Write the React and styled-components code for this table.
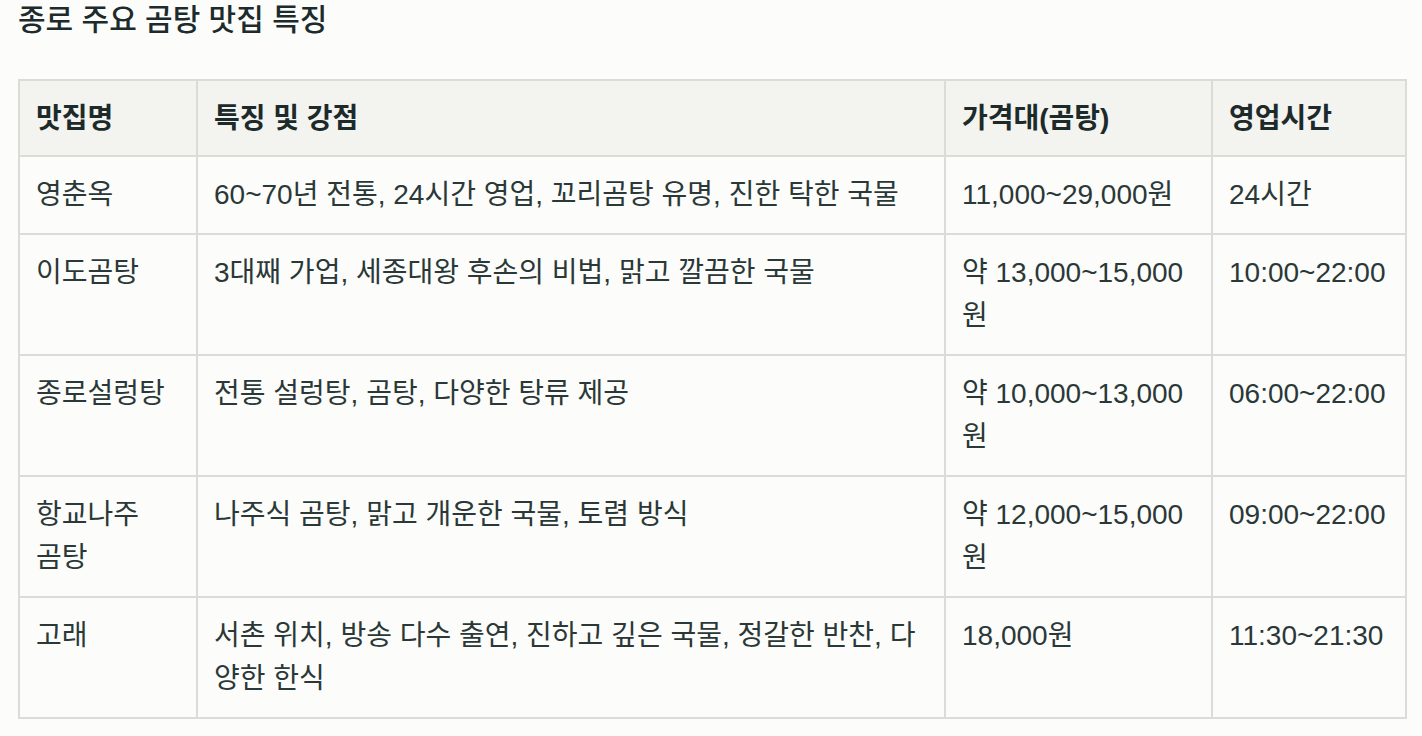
import React from 'react';
import styled, { createGlobalStyle } from 'styled-components';

const GlobalStyle = createGlobalStyle`
    html, body {
        margin: 0;
        padding: 0;
        background-color: #fcfcfa;
    }

    body {
        font-family: "Liberation Sans", "Noto Sans CJK KR", sans-serif;
        color: #1f2f2f;
    }
`;

const restaurants = [
    {
        name: '영춘옥',
        feature: '60~70년 전통, 24시간 영업, 꼬리곰탕 유명, 진한 탁한 국물',
        price: '11,000~29,000원',
        hours: '24시간',
    },
    {
        name: '이도곰탕',
        feature: '3대째 가업, 세종대왕 후손의 비법, 맑고 깔끔한 국물',
        price: '약 13,000~15,000원',
        hours: '10:00~22:00',
    },
    {
        name: '종로설렁탕',
        feature: '전통 설렁탕, 곰탕, 다양한 탕류 제공',
        price: '약 10,000~13,000원',
        hours: '06:00~22:00',
    },
    {
        name: '항교나주 곰탕',
        feature: '나주식 곰탕, 맑고 개운한 국물, 토렴 방식',
        price: '약 12,000~15,000원',
        hours: '09:00~22:00',
    },
    {
        name: '고래',
        feature: '서촌 위치, 방송 다수 출연, 진하고 깊은 국물, 정갈한 반찬, 다양한 한식',
        price: '18,000원',
        hours: '11:30~21:30',
    },
];

const App = () => {
    return (
        <Page>
            <GlobalStyle />
            <Title>종로 주요 곰탕 맛집 특징</Title>
            <Table>
                <colgroup>
                    <col style={{ width: '178px' }} />
                    <col style={{ width: '748px' }} />
                    <col style={{ width: '267px' }} />
                    <col style={{ width: '194px' }} />
                </colgroup>
                <thead>
                    <tr>
                        <Th>맛집명</Th>
                        <Th>특징 및 강점</Th>
                        <Th>가격대(곰탕)</Th>
                        <Th>영업시간</Th>
                    </tr>
                </thead>
                <tbody>
                    {restaurants.map((r) => (
                        <tr key={r.name}>
                            <NameCell>{r.name}</NameCell>
                            <Td>{r.feature}</Td>
                            <Td>{r.price}</Td>
                            <Td>{r.hours}</Td>
                        </tr>
                    ))}
                </tbody>
            </Table>
        </Page>
    );
};

export default App;

const Page = styled.div`
    padding: 0 17px 20px 18px;
    min-height: 100vh;
    box-sizing: border-box;
`;

const Title = styled.h2`
    margin: 0 0 40px;
    padding-top: 1px;
    font-size: 30px;
    line-height: 38px;
    font-weight: 500;
    color: #1c2b2b;
`;

const Table = styled.table`
    width: 100%;
    table-layout: fixed;
    border-collapse: collapse;
    border: 2px solid #dcdcd7;
`;

const Th = styled.th`
    text-align: left;
    vertical-align: top;
    padding: 15.5px 16px 15px;
    font-size: 28px;
    line-height: 43px;
    font-weight: 700;
    color: #1c2a2a;
    background-color: #f3f3f0;
    border: 2px solid #dcdcd7;
`;

const Td = styled.td`
    text-align: left;
    vertical-align: top;
    padding: 16.5px 16px;
    font-size: 28px;
    line-height: 43px;
    font-weight: 400;
    color: #2a3838;
    border: 2px solid #dcdcd7;
`;

const NameCell = styled(Td)`
    padding-right: 24px;
`;
